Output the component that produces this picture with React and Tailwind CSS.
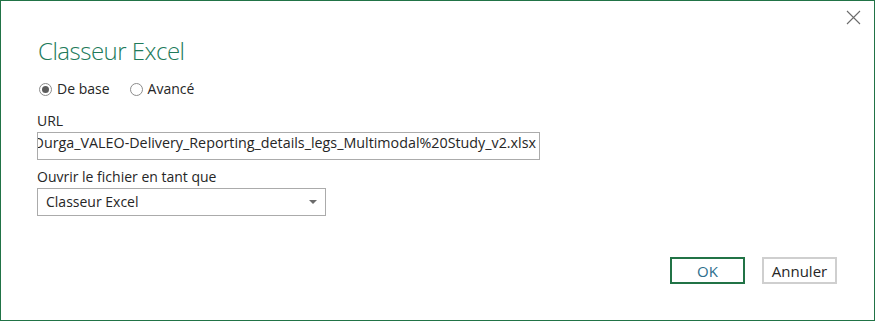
import React from 'react';

const font = { fontFamily: '"Open Sans", "Noto Sans", sans-serif' };

const Radio = ({ checked, label }) => (
  <label className="flex items-center gap-[5px]">
    <span className="w-[13px] h-[13px] rounded-full border border-[#8c8c8c] bg-white flex items-center justify-center">
      {checked && <span className="w-[7px] h-[7px] rounded-full bg-[#5c5c5c]" />}
    </span>
    <span>{label}</span>
  </label>
);

const App = () => {
  return (
    <div
      className="w-[875px] h-[321px] border border-[#217346] bg-white relative text-[14px] leading-[20px] text-[#262626] flex flex-col"
      style={font}
    >
      <button className="absolute right-[13px] top-[9px] w-[15px] h-[15px] flex items-center justify-center">
        <svg width="15" height="15" viewBox="0 0 15 15">
          <path d="M1 1L14 14M14 1L1 14" stroke="#6b6b6b" strokeWidth="1.1" />
        </svg>
      </button>

      <div className="pl-[36px] pt-[34px] flex flex-col">
        <h1 className="text-[24px] leading-[32px] font-light text-[#217a5a] tracking-[-0.5px] ml-[1px]">Classeur Excel</h1>

        <div className="flex items-center gap-[20px] mt-[12px] h-[20px] ml-[2px]">
          <Radio checked label="De base" />
          <Radio label="Avancé" />
        </div>

        <div className="mt-[12px]">URL</div>
        <div className="mt-[1px] h-[28px] w-[503px] border border-[#ababab] flex items-start justify-end overflow-hidden whitespace-nowrap pr-[3px] text-[14.3px]">
          <span>/Durga_VALEO-Delivery_Reporting_details_legs_Multimodal%20Study_v2.xlsx</span>
        </div>

        <div className="mt-[7px]">Ouvrir le fichier en tant que</div>
        <div className="mt-[1px] h-[28px] w-[289px] border border-[#ababab] flex items-start justify-between pl-[8px] pr-[8px]">
          <span className="pt-[3px]">Classeur Excel</span>
          <svg width="8" height="4" viewBox="0 0 8 4" className="self-center">
            <path d="M0 0H8L4 4Z" fill="#6b6b6b" />
          </svg>
        </div>
      </div>

      <div className="flex justify-end gap-[17px] mt-auto mb-[36px] pr-[37px] text-[15px]">
        <button className="w-[75px] h-[27px] border-2 border-[#217346] bg-white text-[#2d6e8c] flex items-center justify-center">
          OK
        </button>
        <button className="w-[75px] h-[27px] border-2 border-[#cfcfcf] bg-white text-[#262626] flex items-center justify-center">
          Annuler
        </button>
      </div>
    </div>
  );
};

export default App;
